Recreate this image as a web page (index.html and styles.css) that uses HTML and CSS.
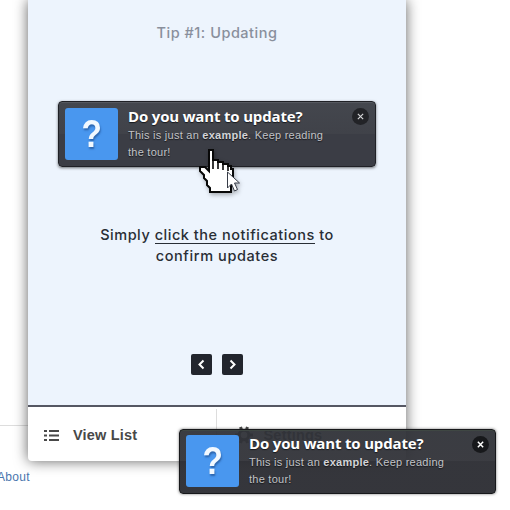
FILE: index.html
```html
<!DOCTYPE html>
<html lang="en">
<head>
<meta charset="utf-8">
<title>Updating tour</title>
<link rel="stylesheet" href="styles.css">
</head>
<body>
<div class="page-rule"></div>
<a class="about">About</a>
<main class="panel">
  <section class="tour">
    <h1 class="tip">Tip #1: Updating</h1>
    <div class="notice">
      <div class="mark"><span>?</span></div>
      <div class="copy">
        <h2>Do you want to update?</h2>
        <p>This is just an <b>example</b>. Keep reading<br>the tour!</p>
      </div>
      <svg class="close" viewBox="0 0 16 16"><circle cx="8" cy="8" r="8"/><path d="M5.5 5.5l5 5M10.5 5.5l-5 5"/></svg>
      <svg class="hand" viewBox="0 0 44 46">
        <path class="skin" d="M12 2h4v10h5v2h5v2h5v2h3v3h2v11l-2 4v8H13v-4l-3-3v-4l-3-3v-3l-4-4v-4h5l4 4z"/>
        <path class="ridge" d="M16 11v10M21 13v8M26 15v7M31 17v6"/>
        <path class="pointer" d="M30.500 24v16l4-4 3 7 3-1.500-3-6.500h5z"/>
      </svg>
    </div>
    <p class="lead">Simply <span class="under">click the notifications</span> to<br><span class="second">confirm updates</span></p>
    <nav class="pager">
      <button><svg viewBox="0 0 21 21"><path d="M12.500 6.500l-4 4 4 4"/></svg></button>
      <button><svg viewBox="0 0 21 21"><path d="M8.500 6.500l4 4-4 4"/></svg></button>
    </nav>
  </section>
  <footer class="actions">
    <div class="action">
      <svg class="list" viewBox="0 0 15 11"><path d="M0 1h3M5 1h10M0 5.500h3M5 5.500h10M0 10h3M5 10h10"/></svg>
      <span>View List</span>
    </div>
    <div class="action second-action">
      <svg class="gear" viewBox="0 0 18 18"><circle cx="9" cy="9" r="4.800"/><path d="M5.500 1l1.500 4M12.500 1l-1.500 4M5.500 17l1.500-4M12.500 17l-1.500-4M0 9h4M14 9h4"/></svg>
      <span>Settings</span>
    </div>
  </footer>
</main>
<aside class="notice toast">
  <div class="mark"><span>?</span></div>
  <div class="copy">
    <h2>Do you want to update?</h2>
    <p>This is just an <b>example</b>. Keep reading<br>the tour!</p>
  </div>
  <svg class="close" viewBox="0 0 16 16"><circle cx="8" cy="8" r="8"/><path d="M5.500 5.500l5 5M10.500 5.500l-5 5"/></svg>
</aside>
</body>
</html>
```
FILE: styles.css
```css
* { box-sizing: border-box; margin: 0; padding: 0; }
body { width: 510px; height: 510px; overflow: hidden; position: relative; background: #fff; font-family: "Liberation Sans", Arial, sans-serif; }
.page-rule { position: absolute; left: 0; top: 425px; width: 28px; height: 1px; background: #ddd; }
.about { position: absolute; left: -3px; top: 470px; font-size: 12px; line-height: 14px; letter-spacing: .3px; color: #4a76ae; }
.panel { position: relative; width: 378px; height: 461px; margin-left: 28px; border-radius: 0 0 4px 4px; background: #fff; box-shadow: 0 0 14px rgba(0,0,0,.62); }
.tour { height: 407px; background: #edf4fd; border-bottom: 2px solid #555763; padding-top: 23px; display: flex; flex-direction: column; align-items: center; }
.tip { font: 500 14.5px/20px Inter, sans-serif; letter-spacing: .52px; color: #898f9c; white-space: nowrap; }
.notice { position: relative; display: flex; width: 318px; height: 66px; margin-top: 58px; padding: 6px; border: 1px solid #202126; border-radius: 4px; background: linear-gradient(#44474e 0, #404249 50%, #3b3d45 50%, #3b3d45 100%); box-shadow: 0 1px 3px rgba(0,0,0,.55), inset 0 1px 0 #565960; }
.mark { flex: none; width: 53px; height: 52px; border-radius: 3px; background: #4997ef; display: flex; align-items: center; justify-content: center; color: #f2f9ff; font: bold 38px/52px "Liberation Sans", sans-serif; text-shadow: 1px 2px 2px rgba(20,60,120,.55); }
.mark span { transform: scaleX(.88); }
.copy { margin: -1px 0 0 10px; white-space: nowrap; text-shadow: 0 1px 1px #17181c; }
.copy h2 { font: bold 15px/19px "Open Sans", sans-serif; letter-spacing: -.17px; color: #fff; }
.copy p { padding-top: 1px; font-size: 11px; line-height: 17px; letter-spacing: .25px; color: #c2c3c7; }
.copy b { color: #d3d4d7; }
.close { position: absolute; right: 6px; top: 6px; width: 17px; height: 17px; }
.close circle { fill: #222327; }
.close path { fill: none; stroke: #d4d5d7; stroke-width: 1.1; }
.hand { position: absolute; left: 138px; top: 46px; width: 44px; height: 46px; filter: drop-shadow(1px 2px 2px rgba(0,0,0,.3)); }
.skin { fill: #fff; stroke: #080808; stroke-width: 2; }
.ridge { fill: none; stroke: #080808; stroke-width: 1.6; }
.pointer { fill: #fff; stroke: #363b46; stroke-width: 1; }
.lead { margin-top: 57px; font: 500 14.5px/21px Inter, sans-serif; letter-spacing: .53px; color: #292e35; text-align: center; white-space: nowrap; }
.under { border-bottom: 1px solid #292e35; }
.second { letter-spacing: .6px; }
.pager { display: flex; gap: 10px; margin-top: 88px; }
.pager button { width: 21px; height: 21px; border: 0; border-radius: 2px; background: #22252d; }
.pager svg { display: block; width: 21px; height: 21px; fill: none; stroke: #fff; stroke-width: 2; }
.actions { display: flex; height: 54px; }
.action { flex: 1; display: flex; align-items: center; padding: 2px 0 0 16px; font-weight: bold; font-size: 14.5px; letter-spacing: .2px; color: #484848; }
.second-action { height: 52px; margin-top: 2px; padding: 0 0 0 18px; border-left: 1px solid #ddd; }
.list { width: 15px; height: 11px; margin-right: 14px; stroke: #484848; stroke-width: 2; }
.gear { width: 18px; height: 18px; margin-right: 11px; fill: none; stroke: #484848; stroke-width: 3; }
.toast { position: absolute; left: 179px; top: 429px; width: 317px; height: 65px; margin: 0; padding: 6px; border-color: #17181b; background: linear-gradient(rgba(48,50,56,.95) 0, rgba(49,50,56,.95) 50%, rgba(42,43,49,.95) 50%, rgba(42,43,49,.95) 100%); box-shadow: 0 0 3px rgba(0,0,0,.55), inset 0 1px 0 #3f4743; }
.toast .mark { height: 52px; margin-top: -1px; }
.toast .copy { margin-top: -2px; }
.toast .close circle { fill: #17181b; }
.toast .close path { stroke: #fff; stroke-width: 1.4; }
```
